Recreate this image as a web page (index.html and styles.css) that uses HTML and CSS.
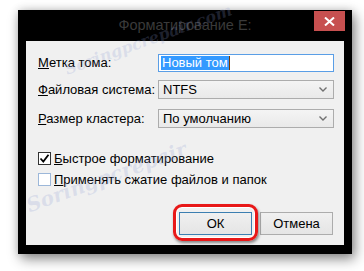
FILE: index.html
```html
<!DOCTYPE html>
<html lang="ru">
<head>
<meta charset="utf-8">
<title>Форматирование E:</title>
<link rel="stylesheet" href="styles.css">
</head>
<body>
<div class="stage">
  <div class="window">
    <div class="titlebar">
      <span class="title">Форматирование E:</span>
      <button class="close" aria-label="Закрыть">
        <svg width="11" height="9" viewBox="0 0 11 9"><path d="M1 0.5 L10 8.5 M10 0.5 L1 8.5" stroke="#fff" stroke-width="2" fill="none"/></svg>
      </button>
    </div>
    <div class="client">
      <div class="form">
        <div class="row r1">
          <span class="label"><u>М</u>етка тома:</span>
          <div class="input"><span class="sel">Новый том</span><span class="caret"></span></div>
        </div>
        <div class="row r2">
          <span class="label"><u>Ф</u>айловая система:</span>
          <div class="combo"><span>NTFS</span><svg class="chev" width="8" height="5" viewBox="0 0 8 5"><path d="M0.5 0.5 L4 4 L7.5 0.5" stroke="#707070" stroke-width="1.4" fill="none"/></svg></div>
        </div>
        <div class="row r3">
          <span class="label"><u>Р</u>азмер кластера:</span>
          <div class="combo"><span>По умолчанию</span><svg class="chev" width="8" height="5" viewBox="0 0 8 5"><path d="M0.5 0.5 L4 4 L7.5 0.5" stroke="#707070" stroke-width="1.4" fill="none"/></svg></div>
        </div>
      </div>
      <div class="checks">
        <div class="check">
          <span class="box checked"><svg width="11" height="11" viewBox="0 0 11 11"><path d="M1.5 5.5 L4.3 8.5 L9.5 1.8" stroke="#000" stroke-width="1.8" fill="none"/></svg></span>
          <span><u>Б</u>ыстрое форматирование</span>
        </div>
        <div class="check">
          <span class="box"></span>
          <span><u>П</u>рименять сжатие файлов и папок</span>
        </div>
      </div>
      <div class="buttons">
        <div class="okwrap">
          <button class="btn ok">ОК</button>
          <span class="ring"></span>
        </div>
        <button class="btn">Отмена</button>
      </div>
    </div>
  </div>
  <span class="wm wm1">Soringpcrepair.com</span>
  <span class="wm wm2">Soringpcrepair</span>
</div>
</body>
</html>
```
FILE: styles.css
```css
html, body {
  margin: 0;
  padding: 0;
  background: #fff;
}
body {
  width: 364px;
  height: 271px;
  overflow: hidden;
  font-family: "Liberation Sans", Arial, sans-serif;
}
.stage {
  position: relative;
  width: 364px;
  height: 271px;
  padding: 10px 0 0 18px;
  box-sizing: border-box;
  overflow: hidden;
}
.window {
  width: 334px;
  height: 244px;
  background: #000;
  box-shadow: 3px 5px 12px rgba(0,0,0,0.45), 0 0 8px rgba(0,0,0,0.15);
  display: flex;
  flex-direction: column;
}
.titlebar {
  height: 31px;
  display: grid;
  grid-template-columns: 1fr auto 1fr;
}
.title {
  grid-column: 2;
  color: #3a3a3a;
  font-size: 14.5px;
  line-height: 30px;
  white-space: nowrap;
}
.close {
  grid-column: 3;
  justify-self: end;
  align-self: start;
  margin: 1px 7px 0 0;
  width: 31px;
  height: 20px;
  border: 0;
  padding: 0;
  background: #c75050;
  display: flex;
  align-items: center;
  justify-content: center;
}
.close svg { display: block; }
.client {
  margin: 0 8px 9px 8px;
  height: 204px;
  background: #f0f0f0;
  box-sizing: border-box;
  padding: 13px 11px 0 12px;
  font-size: 13px;
  color: #000;
}
.form {
  display: flex;
  flex-direction: column;
}
.row {
  display: grid;
  grid-template-columns: 120px 176px;
  align-items: center;
}
.r2 { margin-top: 8px; }
.r3 { margin-top: 10px; }
.label { white-space: nowrap; line-height: 16px; }
.input {
  height: 18px;
  box-sizing: border-box;
  border: 1px solid #5a9ee6;
  background: #fff;
  display: flex;
  align-items: center;
  padding-left: 2px;
}
.sel {
  background: #3399ff;
  color: #fff;
  line-height: 14px;
  padding: 0 1px;
}
.caret {
  width: 1px;
  height: 14px;
  background: #7a3a00;
}
.combo {
  height: 19px;
  box-sizing: border-box;
  border: 1px solid #acacac;
  background: linear-gradient(#f4f4f4, #e9e9e9);
  display: flex;
  align-items: center;
  justify-content: space-between;
  padding: 0 6px 0 4px;
}
.chev { display: block; }
.checks {
  margin-top: 24px;
  display: flex;
  flex-direction: column;
  gap: 8px;
}
.check {
  display: flex;
  align-items: center;
  gap: 3px;
  height: 13px;
  white-space: nowrap;
}
.box {
  width: 13px;
  height: 13px;
  flex: none;
  box-sizing: border-box;
  border: 1px solid #9cb7d9;
  background: #fff;
  display: flex;
  align-items: center;
  justify-content: center;
}
.box.checked { border-color: #333; }
.box svg { display: block; }
.buttons {
  margin-top: 26px;
  display: flex;
  justify-content: flex-end;
  gap: 8px;
}
.okwrap { position: relative; }
.btn {
  width: 73px;
  height: 23px;
  box-sizing: border-box;
  border: 1px solid #acacac;
  background: linear-gradient(#f0f0f0, #e5e5e5);
  font-family: "Liberation Sans", Arial, sans-serif;
  font-size: 13px;
  color: #000;
  padding: 0;
  display: block;
}
.btn.ok { border-color: #3c7fb1; }
.ring {
  position: absolute;
  left: -6px;
  right: -6px;
  top: -8px;
  bottom: -6px;
  border: 3.5px solid #e81818;
  border-radius: 9px;
  box-shadow: 1px 2px 3px rgba(0,0,0,0.45), inset 0 0 0 1px #fff;
}
.wm {
  position: absolute;
  font-family: "DejaVu Serif", serif;
  font-style: italic;
  font-weight: bold;
  font-size: 16px;
  color: rgba(140,155,210,0.22);
  transform: rotate(-20deg);
  white-space: nowrap;
  pointer-events: none;
}
.wm1 { left: 60px; top: 30px; }
.wm2 { left: 22px; top: 165px; font-size: 20px; }
```
